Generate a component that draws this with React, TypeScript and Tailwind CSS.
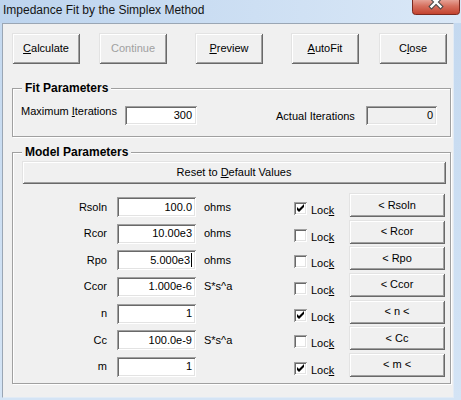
import React from "react";

// classic win32 3d edges
const raised =
  "bg-[#f0f0f0] shadow-[inset_1px_1px_0_#e3e3e3,inset_-1px_-1px_0_#696969,inset_2px_2px_0_#ffffff,inset_-2px_-2px_0_#a0a0a0]";
const sunken =
  "shadow-[inset_1px_1px_0_#a0a0a0,inset_-1px_-1px_0_#ffffff,inset_2px_2px_0_#696969,inset_-2px_-2px_0_#e3e3e3]";

const params = [
  { name: "Rsoln", value: "100.0", unit: "ohms", locked: true, btn: "< Rsoln" },
  { name: "Rcor", value: "10.00e3", unit: "ohms", locked: false, btn: "< Rcor" },
  { name: "Rpo", value: "5.000e3", unit: "ohms", locked: false, btn: "< Rpo", caret: true },
  { name: "Ccor", value: "1.000e-6", unit: "S*s^a", locked: false, btn: "< Ccor" },
  { name: "n", value: "1", unit: "", locked: true, btn: "< n <" },
  { name: "Cc", value: "100.0e-9", unit: "S*s^a", locked: false, btn: "< Cc" },
  { name: "m", value: "1", unit: "", locked: true, btn: "< m <" },
];

function CloseBox() {
  return (
    <svg width="48" height="16" viewBox="0 0 48 16" className="mr-[1px] shrink-0">
      <defs>
        <linearGradient id="closeGrad" x1="0" y1="0" x2="0" y2="1">
          <stop offset="0" stopColor="#e8aa9f" />
          <stop offset="0.45" stopColor="#d6705f" />
          <stop offset="1" stopColor="#c2402c" />
        </linearGradient>
      </defs>
      <path d="M0.5 -1 V11.5 a3 3 0 0 0 3 3 H44.5 a3 3 0 0 0 3 -3 V-1" fill="url(#closeGrad)" stroke="#7b2a20" />
      <path d="M19.5 -2.5 L28.5 6.5 M28.5 -2.5 L19.5 6.5" stroke="#4a4a4a" strokeWidth="4.5" strokeLinecap="square" />
      <path d="M19.5 -2.5 L28.5 6.5 M28.5 -2.5 L19.5 6.5" stroke="#ffffff" strokeWidth="2.4" strokeLinecap="square" />
    </svg>
  );
}

function Checkbox({ checked }: { checked: boolean }) {
  return (
    <div className={`mt-[9px] h-[13px] w-[13px] shrink-0 bg-white ${sunken}`}>
      {checked && (
        <svg width="13" height="13" viewBox="0 0 13 13">
          <polygon points="3,5 5,7 10,2 10,5 5,10 3,8" fill="#000" />
        </svg>
      )}
    </div>
  );
}

export default function App() {
  return (
    <div className="flex h-[400px] w-[461px] flex-col overflow-hidden bg-gradient-to-b from-[#c3d8ef] to-[#d4e4f5] font-['Liberation_Sans',Arial,sans-serif] text-[11px] leading-[13px] text-black">
      {/* title bar */}
      <div className="flex h-[23px] shrink-0 items-start justify-between bg-gradient-to-r from-[#bdd4ee] to-[#dae8f7]">
        <span className="pl-[3px] pt-[3px] text-[12px] leading-[14px] text-[#141414]">
          Impedance Fit by the Simplex Method
        </span>
        <CloseBox />
      </div>

      {/* client area */}
      <div className="mb-[2px] ml-[2px] mr-[7px] flex-1 border border-[#9aa6b4] border-b-[#e2ebf5] border-r-[#e2ebf5] bg-[#f0f0f0]">
        <div className="flex pl-[9px] pt-[9px]">
          <div className={`flex h-[31px] w-[68px] items-center justify-center ${raised}`}>
            <span><u>C</u>alculate</span>
          </div>
          <div className={`ml-[19px] flex h-[31px] w-[68px] items-center justify-center text-[#a0a0a0] ${raised}`}>
            Continue
          </div>
          <div className={`ml-[28px] flex h-[31px] w-[68px] items-center justify-center ${raised}`}>
            <span><u>P</u>review</span>
          </div>
          <div className={`ml-[28px] flex h-[31px] w-[68px] items-center justify-center ${raised}`}>
            <span><u>A</u>utoFit</span>
          </div>
          <div className={`ml-[20px] flex h-[31px] w-[68px] items-center justify-center ${raised}`}>
            <span>C<u>l</u>ose</span>
          </div>
        </div>

        <fieldset className="ml-[9px] mr-[2px] mt-[17px] border border-[#a0a0a0] shadow-[inset_1px_1px_0_#ffffff,1px_1px_0_#ffffff]">
          <legend className="ml-[9px] bg-[#f0f0f0] px-[3px] text-[12px] font-bold leading-[14px]">Fit Parameters</legend>
          <div className="flex h-[41px] items-start pl-[8px] pt-[11px]">
            <span className="-mt-[1px] w-[104px]">
              Maximum <u>I</u>terations
            </span>
            <div className={`flex h-[19px] w-[72px] items-center justify-end bg-white pr-[5px] ${sunken}`}>300</div>
            <span className="ml-[79px] mt-[4px] w-[90px]">Actual Iterations</span>
            <div className={`flex h-[19px] w-[71px] items-center justify-end bg-[#f0f0f0] pr-[4px] ${sunken}`}>0</div>
          </div>
        </fieldset>

        <fieldset className="ml-[9px] mr-[2px] mt-[8px] border border-[#a0a0a0] shadow-[inset_1px_1px_0_#ffffff,1px_1px_0_#ffffff]">
          <legend className="ml-[9px] bg-[#f0f0f0] px-[3px] text-[12px] font-bold leading-[14px]">Model Parameters</legend>
          <div className="pb-[3px] pl-[9px] pr-[4px] pt-[2px]">
            <div className={`flex h-[23px] items-center justify-center ${raised}`}>
              <span>
                Reset to <u>D</u>efault Values
              </span>
            </div>
            <div className="mt-[9px]">
              {params.map((p) => (
                <div key={p.name} className="flex h-[26.667px] items-start">
                  <div className="mt-[4px] flex h-[20px] w-[95px] items-center justify-end pr-[10px]">{p.name}</div>
                  <div className={`mt-[4px] flex h-[20px] w-[79px] items-center justify-end bg-white pr-[4px] ${sunken}`}>
                    {p.value}
                    {p.caret && <span className="ml-px h-[14px] w-px bg-black" />}
                  </div>
                  <div className="mt-[4px] flex h-[20px] w-[98px] items-center pl-[8px]">{p.unit}</div>
                  <div className="flex w-[55px] items-start">
                    <Checkbox checked={p.locked} />
                    <span className="ml-[4px] mt-[11px]">
                      Loc<u>k</u>
                    </span>
                  </div>
                  <div className={`flex h-[24px] w-[96px] items-center justify-center ${raised}`}>{p.btn}</div>
                </div>
              ))}
            </div>
          </div>
        </fieldset>
      </div>
    </div>
  );
}
